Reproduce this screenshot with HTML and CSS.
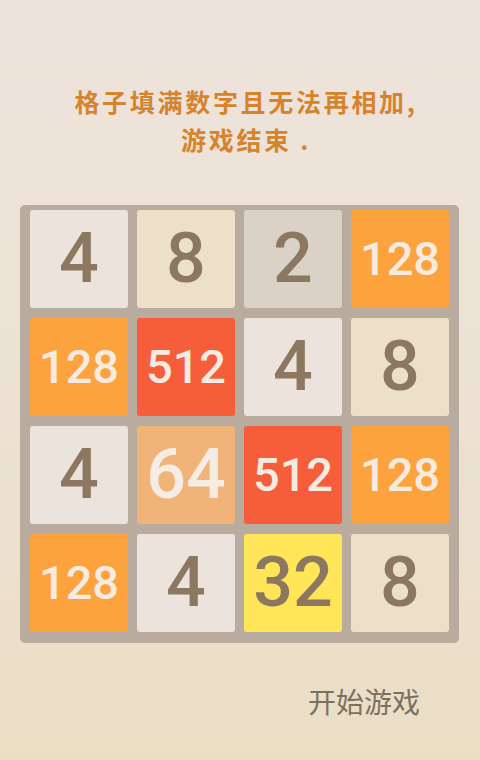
FILE: index.html
```html
<!DOCTYPE html>
<html lang="zh-CN">

<head>
  <meta charset="UTF-8">
  <meta name="viewport" content="width=device-width, initial-scale=1.0">
  <title>2048</title>
  <link rel="stylesheet" href="styles.css">
</head>

<body>
  <div class="screen">
    <!-- Game over hint -->
    <p class="tip">格子填满数字且无法再相加,<br>游戏结束 .</p>

    <!-- Board with 16 tiles -->
    <div class="board">
      <div class="tile t4">4</div>
      <div class="tile t8">8</div>
      <div class="tile t2">2</div>
      <div class="tile t128">128</div>

      <div class="tile t128">128</div>
      <div class="tile t512">512</div>
      <div class="tile t4">4</div>
      <div class="tile t8">8</div>

      <div class="tile t4">4</div>
      <div class="tile t64">64</div>
      <div class="tile t512">512</div>
      <div class="tile t128">128</div>

      <div class="tile t128">128</div>
      <div class="tile t4">4</div>
      <div class="tile t32">32</div>
      <div class="tile t8">8</div>
    </div>

    <!-- Start button -->
    <div class="actions">
      <button class="start">开始游戏</button>
    </div>
  </div>
</body>

</html>
```

FILE: styles.css
```css
/* Page background, soft beige gradient */
body {
  margin: 0;
  height: 760px;
  overflow: hidden;
  background: linear-gradient(180deg, #ede3db 0%, #ece2d4 50%, #ebdec5 100%);
  font-family: Roboto, "Noto Sans CJK SC", sans-serif;
}

.screen {
  display: flex;
  flex-direction: column;
  align-items: center;
}

/* Hint text above the board */
.tip {
  margin: 82px 0 0 12px;
  font-family: "Noto Sans CJK SC", sans-serif;
  font-weight: 700;
  font-size: 25px;
  line-height: 38px;
  letter-spacing: 2.7px;
  color: #d5842d;
  text-align: center;
}

/* Board */
.board {
  margin: 47px 0 0 -1px;
  width: 420px;
  display: grid;
  grid-template-columns: repeat(4, 98px);
  grid-auto-rows: 98px;
  column-gap: 9px;
  row-gap: 10px;
  padding: 5px 9px 11px 10px;
  background: #b9ab9d;
  border-radius: 5px;
}

.tile {
  display: flex;
  align-items: center;
  justify-content: center;
  border-radius: 3px;
  font-size: 70px;
  font-weight: 500;
  color: #8c7860;
  padding-bottom: 2px;
  box-sizing: border-box;
}

/* Three-digit numbers need a smaller size */
.t128,
.t512 {
  font-size: 47px;
  color: #f6ebe0;
}

.t2 { background: #dbd2c7; }
.t4 { background: #ece4dc; }
.t8 { background: #ece0c9; }
.t32 { background: #fee658; }
.t64 { background: #f0b378; color: #f5ece3; }
.t128 { background: #fca33d; }
.t512 { background: #f55d3b; }

/* Start button area */
.actions {
  align-self: stretch;
  display: flex;
  justify-content: flex-end;
  padding: 38px 60px 0 0;
}

.start {
  border: none;
  background: transparent;
  padding: 0;
  font-family: "Noto Sans CJK SC", sans-serif;
  font-size: 28px;
  color: #7a7161;
  cursor: pointer;
}
```
